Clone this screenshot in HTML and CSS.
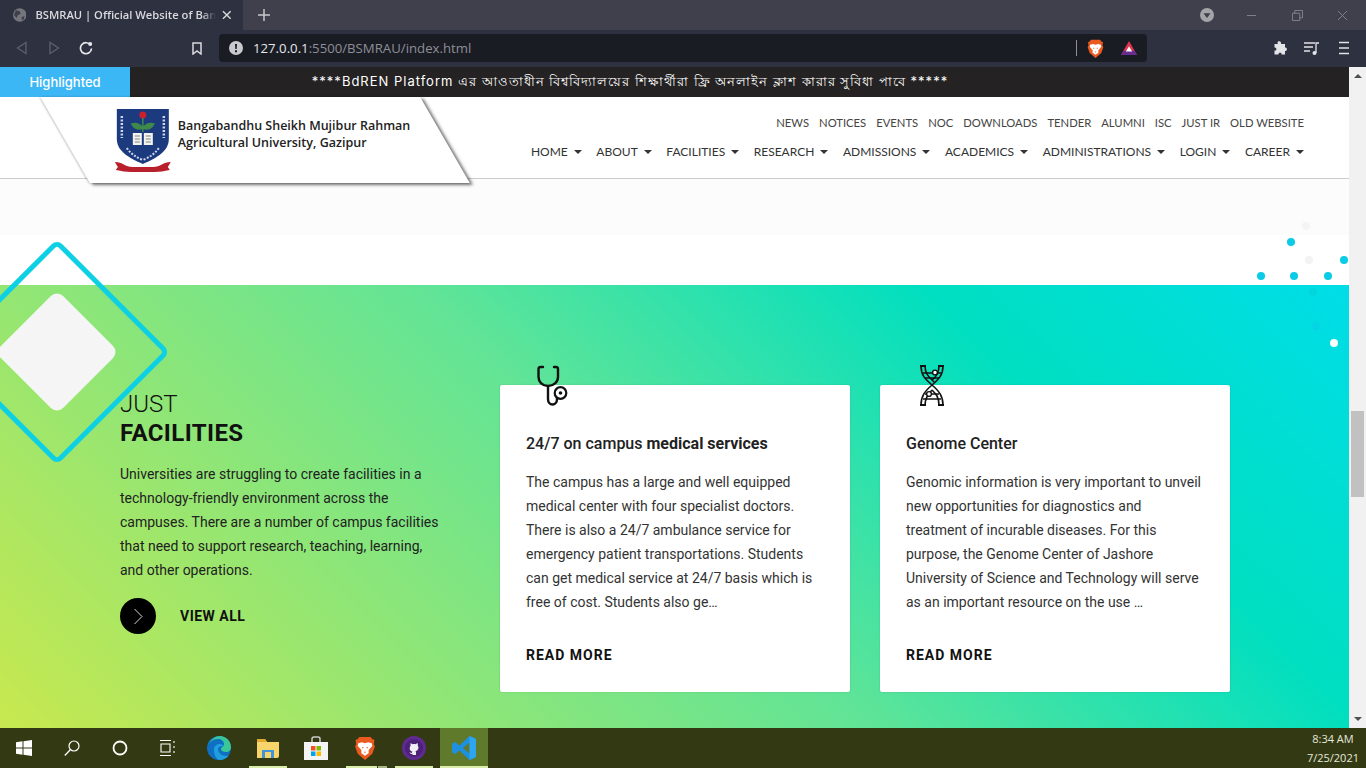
FILE: index.html
```html
<!DOCTYPE html>
<html lang="en">
<head>
    <meta charset="UTF-8">
    <title>BSMRAU | Official Website</title>
    <link rel="stylesheet" href="styles.css">
</head>
<body>
    <!-- browser chrome -->
    <div class="tabstrip">
        <div class="tab">
            <svg class="tab-globe" viewBox="0 0 14 14"><circle cx="7" cy="7" r="7" fill="#74757d"/><path d="M3 2l4 1 1 3-3 1-1 3-3-3zM9 9l3-1-1 4-2 0z" fill="#3f404b"/></svg>
            <span class="tab-title">BSMRAU | Official Website of Ban</span>
            <svg class="tab-close" viewBox="0 0 10 10"><path d="M1 1l8 8M9 1l-8 8" stroke="#d8d8dc" stroke-width="1.5"/></svg>
        </div>
        <svg class="tab-new" viewBox="0 0 14 14"><path d="M7 1v12M1 7h12" stroke="#c8c8cc" stroke-width="1.5"/></svg>
        <div class="window-controls">
            <svg class="profile" viewBox="0 0 14 14"><circle cx="7" cy="7" r="7" fill="#a3a3a8"/><path d="M3.5 5.2h7L7 10z" fill="#3d3e48"/></svg>
            <svg class="win-btn" viewBox="0 0 12 12"><path d="M1 6h10" stroke="#85868c"/></svg>
            <svg class="win-btn" viewBox="0 0 12 12"><path d="M.5 3.5h8v8h-8zM3 3.5V.5h8.500v8H8.500" stroke="#85868c" fill="none"/></svg>
            <svg class="win-btn" viewBox="0 0 12 12"><path d="M1 1l10 10M11 1L1 11" stroke="#85868c"/></svg>
        </div>
    </div>
    <div class="toolbar">
        <svg class="nav-arrow" viewBox="0 0 12 14"><path d="M10 1.500v11L1.500 7z" fill="none" stroke="#5d606c" stroke-width="1.300"/></svg>
        <svg class="nav-arrow" viewBox="0 0 12 14"><path d="M2 1.500v11L10.500 7z" fill="none" stroke="#5d606c" stroke-width="1.300"/></svg>
        <svg class="reload" viewBox="0 0 14 14"><path d="M11.600 4.200A5.500 5.500 0 1 0 12.500 7.500" fill="none" stroke="#e4e5e8" stroke-width="1.700"/><circle cx="11.200" cy="3" r="2" fill="#e4e5e8"/></svg>
        <svg class="bookmark" viewBox="0 0 10 13"><path d="M1 1h8v11L5 9l-4 3z" fill="none" stroke="#d9dade" stroke-width="1.500"/></svg>
        <div class="address-bar">
            <svg class="site-info" viewBox="0 0 14 14"><circle cx="7" cy="7" r="7" fill="#c9cacd"/><path d="M6 3h2l-.3 5H6.300zM6 9.300h2v2H6z" fill="#1a1c24"/></svg>
            <span class="url"><b>127.0.0.1</b>:5500/BSMRAU/index.html</span>
            <span class="bar-sep"></span>
            <svg class="brave-small" viewBox="0 0 20 23"><path d="M4.500 1h11l1.500 2 2 .5-.5 4.500 1 2-2.500 7L10 23l-7-6-2.500-7 1-2L1 3.500 3 3z" fill="#ea5a1e"/><path d="M3.500 7L7 6l3 1 3-1 3.500 1 .5 2.500-3.500 4v3L10 19l-3.500-2.500v-3L3 9.500z" fill="#fff"/><path d="M7 10.500l2 .5-1.500 1zM13 10.500l-2 .5 1.500 1zM9 15h2l-1 1.500z" fill="#ea5a1e"/></svg>
            <svg class="bat" viewBox="0 0 20 18"><path d="M10 1l9 16H1z" fill="#e0344f"/><path d="M1 17l3-5h12l3 5z" fill="#662d91"/><path d="M10 7l3.500 6h-7z" fill="#fff"/></svg>
        </div>
        <svg class="tool-icon" viewBox="0 0 16 16"><path d="M6 1.500c2-.8 3.500.5 3 2.500h4v3.500c2-.8 3 3.500 0 3.500v3.500H9.500c.8-2.500-3.500-2.500-3 0H2.500v-4c2.500.8 2.500-3.500 0-3V4H6c-.6-1 -.6-2 0-2.500z" fill="#e3e4e7"/></svg>
        <svg class="tool-icon" viewBox="0 0 16 16"><path d="M0 3h11M0 7h9M0 11h6" stroke="#e3e4e7" stroke-width="1.300"/><path d="M12 13V3h3" stroke="#e3e4e7" stroke-width="1.300" fill="none"/><circle cx="10.500" cy="13" r="2" fill="#e3e4e7"/></svg>
        <svg class="tool-icon" viewBox="0 0 16 16"><path d="M3 2.500h10M3 8h10M3 13.500h10" stroke="#e3e4e7" stroke-width="1.600"/></svg>
    </div>

    <div class="viewport">
        <div class="page">
            <div class="ticker">
                <span class="ticker-label">Highlighted</span>
                <span class="ticker-text">****BdREN Platform এর আওতাধীন বিশ্ববিদ্যালয়ের শিক্ষার্থীরা ফ্রি অনলাইন ক্লাশ কারার সুবিধা পাবে *****</span>
            </div>

            <header class="site-header">
                <div class="logo-plate">
                    <div class="logo-inner">
                        <svg class="crest" viewBox="0 0 56 64">
                            <path d="M2 1h52v30c0 12-12 19-26 25C14 50 2 43 2 31z" fill="#1c3a7e"/>
                            <circle cx="28" cy="7" r="3.500" fill="#c8202c"/>
                            <path d="M28 10v14M28 20c-3-4-7-5-11-4 2 4 6 6 11 4zM28 20c3-4 7-5 11-4-2 4-6 6-11 4z" stroke="#3f8a4a" stroke-width="1.500" fill="#3f8a4a"/>
                            <path d="M18 25h9v12h-9zM29 25h9v12h-9z" fill="#f2f2ee"/>
                            <path d="M20 28h5M20 31h5M20 34h5M31 28h5M31 31h5M31 34h5" stroke="#555" stroke-width=".7"/>
                            <path d="M7 8v22M49 8v22" stroke="#cfd6ea" stroke-width="2.500" stroke-dasharray="2 1.500"/>
                            <path d="M12 40c4 6 9 9 16 12 7-3 12-6 16-12" fill="none" stroke="#cfd6ea" stroke-width="2" stroke-dasharray="2 1.500"/>
                            <path d="M0 54c8 0 10 5 18 5h20c8 0 10-5 18-5l-3 5 2 3c-6 1-10 2-15 2H16c-5 0-9-1-15-2l2-3z" fill="#b8202c"/>
                        </svg>
                        <div class="logo-text">Bangabandhu Sheikh Mujibur Rahman<br>Agricultural University, Gazipur</div>
                    </div>
                </div>
                <nav class="nav-wrap">
                    <ul class="nav-top">
                        <li>NEWS</li><li>NOTICES</li><li>EVENTS</li><li>NOC</li><li>DOWNLOADS</li><li>TENDER</li><li>ALUMNI</li><li>ISC</li><li>JUST IR</li><li>OLD WEBSITE</li>
                    </ul>
                    <ul class="nav-main">
                        <li>HOME</li><li>ABOUT</li><li>FACILITIES</li><li>RESEARCH</li><li>ADMISSIONS</li><li>ACADEMICS</li><li>ADMINISTRATIONS</li><li>LOGIN</li><li>CAREER</li>
                    </ul>
                </nav>
            </header>

            <div class="band-grey"></div>
            <div class="band-white"></div>

            <section class="facilities">
                <svg class="diamonds" viewBox="0 0 224 224">
                    <rect x="34.500" y="34.500" width="155" height="155" rx="5" transform="rotate(45 112 112)" fill="none" stroke="#0dd0e4" stroke-width="5"/>
                    <rect x="68" y="68" width="88" height="88" rx="9" transform="rotate(45 112 112)" fill="#f5f5f5"/>
                </svg>
                <svg class="dots" viewBox="0 0 120 130">
                    <circle cx="49" cy="4" r="4" fill="#f4f4f4"/>
                    <circle cx="34" cy="20" r="4" fill="#0ccbe6"/>
                    <circle cx="52" cy="38" r="4" fill="#f3f3f3"/>
                    <circle cx="87" cy="38" r="4" fill="#0ccbe6"/>
                    <circle cx="4" cy="54" r="4" fill="#0ccbe6"/>
                    <circle cx="37" cy="54" r="4" fill="#0ccbe6"/>
                    <circle cx="71" cy="54" r="4" fill="#0ccbe6"/>
                    <circle cx="56" cy="70" r="4" fill="#00d6dc"/>
                    <circle cx="59" cy="104" r="4" fill="#05d4e4"/>
                    <circle cx="77" cy="121" r="4" fill="#fff"/>
                </svg>

                <div class="intro">
                    <h2 class="intro-title"><span>JUST</span><b>FACILITIES</b></h2>
                    <p class="intro-text">Universities are struggling to create facilities in a technology-friendly environment across the campuses. There are a number of campus facilities that need to support research, teaching, learning, and other operations.</p>
                    <div class="view-all">
                        <span class="round-btn"><svg viewBox="0 0 10 17"><path d="M1.500 1L9 8.500 1.500 16" fill="none" stroke="#d8d8d8" stroke-width="1"/></svg></span>
                        <span class="view-all-label">VIEW ALL</span>
                    </div>
                </div>

                <article class="card">
                    <svg class="card-icon" viewBox="0 0 31 41">
                        <path d="M6 2H3.500C2 2 1.500 3 1.500 4v8c0 5 4 9 9.500 9s10-4 10-9V4c0-1-.5-2-2-2H17" fill="none" stroke="#111" stroke-width="2.400" stroke-linecap="round"/>
                        <path d="M11 21v13c0 3.500 2 5.500 4.500 5.500s4.500-2 4.500-5.500v-1" fill="none" stroke="#111" stroke-width="2.400"/>
                        <circle cx="23.500" cy="28" r="5.800" fill="none" stroke="#111" stroke-width="2.200"/>
                        <circle cx="23.500" cy="28" r="1.800" fill="#111"/>
                    </svg>
                    <h3 class="card-title">24/7 on campus <b>medical services</b></h3>
                    <p class="card-text">The campus has a large and well equipped medical center with four specialist doctors. There is also a 24/7 ambulance service for emergency patient transportations. Students can get medical service at 24/7 basis which is free of cost. Students also ge…</p>
                    <a class="read-more">READ MORE</a>
                </article>

                <article class="card">
                    <svg class="card-icon card-icon-dna" viewBox="0 0 28 41">
                        <path d="M2 1h6M20 1h6M2 40h6M20 40h6" stroke="#111" stroke-width="2"/>
                        <path d="M3 1c0 9 4 13 11 19 7 6 11 11 11 20M7 1c0 8 4 11 9 16M25 1c0 9-4 13-11 19C7 26 3 31 3 40M21 1c0 7-3 11-7 14M7 40c0-7 3-11 7-15M21 40c0-8-3-11-7-15" fill="none" stroke="#111" stroke-width="1.600"/>
                        <path d="M5 8h18M7 13h14M7 29h14M5 34h18" stroke="#111" stroke-width="1.500"/>
                        <circle cx="17" cy="7.500" r="2.400" fill="#fff" stroke="#111" stroke-width="1.400"/>
                        <circle cx="11" cy="29" r="2.400" fill="#fff" stroke="#111" stroke-width="1.400"/>
                    </svg>
                    <h3 class="card-title">Genome Center</h3>
                    <p class="card-text">Genomic information is very important to unveil new opportunities for diagnostics and treatment of incurable diseases. For this purpose, the Genome Center of Jashore University of Science and Technology will serve as an important resource on the use …</p>
                    <a class="read-more">READ MORE</a>
                </article>
            </section>
        </div>

        <div class="scrollbar">
            <span class="scroll-up"></span>
            <span class="scroll-thumb"></span>
            <span class="scroll-down"></span>
        </div>
    </div>

    <!-- windows taskbar -->
    <footer class="taskbar">
        <div class="task-slot">
            <svg class="task-icon" viewBox="0 0 16 16"><path d="M0 2.300l6.500-1v6.300H0zM7.500 1.200L16 0v7.600H7.500zM0 8.500h6.500v6.300l-6.500-1zM7.500 8.500H16V16l-8.500-1.200z" fill="#fff"/></svg>
        </div>
        <div class="task-slot">
            <svg class="task-icon" viewBox="0 0 16 16"><circle cx="10" cy="6" r="5" fill="none" stroke="#fff" stroke-width="1.200"/><path d="M6.500 9.500L.8 15.500" stroke="#fff" stroke-width="1.300"/></svg>
        </div>
        <div class="task-slot">
            <svg class="task-icon" viewBox="0 0 16 16"><circle cx="8" cy="8" r="6.500" fill="none" stroke="#fff" stroke-width="1.800"/></svg>
        </div>
        <div class="task-slot">
            <svg class="task-icon" viewBox="0 0 16 16"><path d="M0 .5h11M0 15.500h11M1 4h9v8H1zM14 1v2M14 6v2M14 11v2" fill="none" stroke="#fff" stroke-width="1.100"/></svg>
        </div>
        <div class="task-slot slot-edge">
            <svg class="app-icon" viewBox="0 0 24 24">
                <circle cx="12" cy="12" r="12" fill="#0f6fc2"/>
                <path d="M1 10C3 3 9 0 13 0c6 0 11 5 11 11 0 3-2 5-5 5-3 0-5-1-5-3 0-2 3-2 3-5 0-3-3-5-6-5-5 0-9 3-10 7z" fill="#39c79a"/>
                <path d="M7 13c0-3 3-5 6-5 2 0 3 1 3 2-3 0-5 1-5 3 0 4 4 7 8 7 1 0 2-.2 3-.7-2 3-6 4.700-9 4.700-4 0-6-5-6-11z" fill="#1f9fe0"/>
            </svg>
        </div>
        <div class="task-slot running">
            <svg class="app-icon" viewBox="0 0 24 22">
                <path d="M1 2h8l2 3h12v14a2 2 0 0 1-2 2H1z" fill="#f8d56b"/>
                <path d="M1 2h8l2 3H1z" fill="#e2a92f"/>
                <path d="M6 13h12v8H6z" fill="#3f95d6"/>
                <path d="M9 15h6v6H9z" fill="#f8d56b"/>
            </svg>
        </div>
        <div class="task-slot">
            <svg class="app-icon" viewBox="0 0 24 24">
                <path d="M8 6V3a2 2 0 0 1 2-2h4a2 2 0 0 1 2 2v3" fill="none" stroke="#ccc" stroke-width="1.500"/>
                <path d="M0 6h24v18H0z" fill="#f4f4f4"/>
                <path d="M7 10h4.500v4.500H7z" fill="#f25022"/><path d="M12.500 10H17v4.500h-4.500z" fill="#7fba00"/>
                <path d="M7 15.500h4.500V20H7z" fill="#00a4ef"/><path d="M12.500 15.500H17V20h-4.500z" fill="#ffb900"/>
            </svg>
        </div>
        <div class="task-slot running running-multi">
            <svg class="app-icon" viewBox="0 0 20 23"><path d="M4.500 1h11l1.500 2 2 .5-.5 4.500 1 2-2.500 7L10 23l-7-6-2.500-7 1-2L1 3.500 3 3z" fill="#ea5a1e"/><path d="M3.500 7L7 6l3 1 3-1 3.500 1 .5 2.500-3.500 4v3L10 19l-3.500-2.500v-3L3 9.500z" fill="#fff"/><path d="M7 10.500l2 .5-1.500 1zM13 10.500l-2 .5 1.500 1zM9 15h2l-1 1.500z" fill="#ea5a1e"/></svg>
        </div>
        <div class="task-slot running">
            <svg class="app-icon" viewBox="0 0 24 24"><circle cx="12" cy="12" r="12" fill="#5f2b91"/><circle cx="12" cy="12" r="9" fill="#4d2178"/><path d="M8.500 7l2 1.200c1-.3 2-.3 3 0l2-1.200c.4 1 .4 2 .2 2.600 1.500 2 .8 5-2.200 5.700.4.400.5 1 .5 1.500V19h-3.500v-1.200c-1.500.4-2.700-.2-3-1.500.8.200 1.500.7 2.300.7.100-.6.200-1.100.6-1.500-3-.7-3.300-3.800-1.800-5.800-.2-.6-.2-1.700 0-2.700z" fill="#f2eef6"/></svg>
        </div>
        <div class="task-slot running active">
            <svg class="app-icon app-icon-code" viewBox="0 0 24 24">
                <path d="M17.500 0L24 3v18l-6.500 3-10-9.500L3 18l-3-1.500v-9L3 6l4.500 3.500zM17.500 6.500L11 12l6.500 5.500z" fill="#1f8fe0"/>
                <path d="M17.500 0L24 3v18l-6.500 3z" fill="#2ea6ef"/>
            </svg>
        </div>
        <div class="clock">8:34 AM<br>7/25/2021</div>
    </footer>
</body>
</html>
```

FILE: styles.css
```css
* { box-sizing: border-box; }
html, body { height: 100%; }
body { margin: 0; overflow: hidden; font-family: Roboto, sans-serif; background: #fff; display: flex; flex-direction: column; }
ul { list-style: none; margin: 0; padding: 0; }
svg { display: block; }

/* browser chrome */
.tabstrip { height: 30px; flex: none; display: flex; align-items: center; background: #3f404b; }
.tab { width: 243px; height: 30px; display: flex; align-items: center; padding: 0 11px 0 13px; background: #2e313f; }
.tab-globe { width: 14px; height: 14px; margin-right: 9px; }
.tab-title { flex: 1; white-space: nowrap; font: 600 11.2px/14px "Open Sans", sans-serif; color: #d9dade; -webkit-mask-image: linear-gradient(to left, transparent 0, #000 14px); mask-image: linear-gradient(to left, transparent 0, #000 14px); }
.tab-close { width: 10px; height: 10px; margin-left: 6px; }
.tab-new { width: 14px; height: 14px; margin-left: 14px; }
.window-controls { margin-left: auto; display: flex; align-items: center; }
.profile { width: 14px; height: 14px; margin-right: 32px; }
.win-btn { width: 11px; height: 11px; margin-right: 35px; }
.win-btn:nth-child(3) { margin-right: 34px; }
.win-btn:last-child { margin-right: 18px; }

.toolbar { height: 37px; flex: none; display: flex; align-items: center; padding: 0 0 1px 16px; background: #2e313f; }
.nav-arrow { width: 12px; height: 14px; margin-right: 20px; }
.reload { width: 14px; height: 14px; margin-left: -1px; }
.bookmark { width: 10px; height: 13px; margin-left: 99px; margin-right: 17px; }
.address-bar { width: 928px; height: 28px; flex: none; display: flex; align-items: center; padding: 0 9px 0 10px; background: #1a1c24; border-radius: 4px; }
.site-info { width: 14px; height: 14px; margin-right: 10px; }
.url { flex: 1; font: 13.2px "Open Sans", sans-serif; color: #8d8f97; }
.url b { font-weight: 400; color: #e6e7ea; }
.bar-sep { width: 1px; height: 16px; background: #8d8f97; margin-right: 10px; }
.brave-small { width: 17px; height: 19px; margin-right: 16px; }
.bat { width: 18px; height: 16px; }
.tool-icon { width: 16px; height: 16px; margin-left: 16px; }
.address-bar + .tool-icon { margin-left: 125px; }

/* page */
.viewport { flex: 1; display: flex; min-height: 0; }
.page { flex: 1; min-width: 0; overflow: hidden; display: flex; flex-direction: column; }
.scrollbar { width: 17px; flex: none; display: flex; flex-direction: column; align-items: center; background: #f1f1f1; }
.scroll-up { margin-top: 7px; border: 4px solid transparent; border-top: 0; border-bottom: 4px solid #505050; }
.scroll-thumb { width: 13px; height: 86px; margin-top: 333px; background: #c1c1c1; }
.scroll-down { margin-top: auto; margin-bottom: 7px; border: 4px solid transparent; border-bottom: 0; border-top: 4px solid #505050; }

.ticker { height: 30px; flex: none; display: flex; align-items: center; background: #242222; }
.ticker-label { width: 130px; height: 30px; text-align: center; font: 500 13px/30px Inter, sans-serif; color: #fff; background: #3cb7f6; }
.ticker-text { flex: 1; text-align: center; padding-right: 219px; font: 400 13px Inter, "Noto Sans", sans-serif; letter-spacing: 1px; color: #fff; white-space: nowrap; }

.site-header { height: 82px; flex: none; position: relative; display: flex; justify-content: flex-end; background: #fff; border-bottom: 1px solid #ccc; }
.logo-plate { position: absolute; z-index: 3; left: 65px; top: 0; width: 380px; height: 86px; background: #fff; transform: skewX(30deg); box-shadow: 2px 2px 3px rgba(0, 0, 0, .55), -1px 0 2px rgba(0, 0, 0, .2); }
.logo-inner { transform: skewX(-30deg); display: flex; align-items: flex-start; padding: 11px 0 0 53px; }
.crest { width: 56px; height: 64px; flex: none; }
.logo-text { margin: 9px 0 0 7px; white-space: nowrap; font: 600 12.5px/17px "Open Sans", sans-serif; color: #222; }

.nav-wrap { padding: 19px 45px 0 0; font-family: Lato, sans-serif; }
.nav-top { display: flex; justify-content: flex-end; gap: 10px; font-size: 11.25px; line-height: 14px; color: #444; }
.nav-main { display: flex; justify-content: flex-end; gap: 14.6px; margin-top: 14px; font-size: 12px; line-height: 16px; color: #333; }
.nav-main li { display: flex; align-items: center; }
.nav-main li::after { content: ""; margin-left: 6px; border: 4px solid transparent; border-bottom: 0; border-top: 4px solid #333; }

.band-grey { height: 56px; flex: none; background: #fcfcfc; }
.band-white { height: 50px; flex: none; background: #fff; }

.facilities { flex: 1; position: relative; display: flex; align-items: flex-start; padding: 100px 0 0 120px; background: linear-gradient(45deg, #c8e84e 0%, #62e496 48%, #00dfc0 76%, #00dde8 100%); }
.diamonds { position: absolute; left: -55px; top: -45px; width: 224px; height: 224px; overflow: visible; }
.dots { position: absolute; left: 1257px; top: -63px; width: 120px; height: 130px; }

.intro { position: relative; width: 320px; margin-right: 60px; padding-top: 5px; }
.intro-title { margin: 0; font-size: 24px; line-height: 29px; font-weight: 300; color: #111; }
.intro-title span, .intro-title b { display: block; }
.intro-title b { font-weight: 700; letter-spacing: .4px; }
.intro-text { margin: 14px 0 0; font-size: 14px; line-height: 24px; color: #222; }
.view-all { display: flex; align-items: center; margin-top: 16px; }
.round-btn { width: 36px; height: 36px; border-radius: 50%; display: flex; align-items: center; justify-content: center; background: #000; }
.round-btn svg { width: 10px; height: 17px; }
.view-all-label { margin-left: 24px; font-size: 14px; font-weight: 700; letter-spacing: .5px; color: #111; }

.card { position: relative; width: 350px; height: 307px; margin-right: 30px; padding: 0 26px; background: #fff; border-radius: 2px; box-shadow: 0 0 2px rgba(0, 0, 0, .15); }
.card-icon { width: 31px; height: 41px; margin: -20px 0 0 11px; }
.card-icon-dna { width: 28px; margin-left: 12px; }
.card-title { margin: 28px 0 0; font-size: 16px; line-height: 20px; font-weight: 500; color: #222; }
.card-title b { font-weight: 700; }
.card-text { margin: 16px 0 0; font-size: 14px; line-height: 24px; color: #333; }
.read-more { display: block; margin-top: 33px; font-size: 14px; font-weight: 700; letter-spacing: 1px; color: #111; }

/* taskbar */
.taskbar { height: 40px; flex: none; display: flex; background: #333a13; }
.task-slot { width: 48px; height: 40px; position: relative; display: flex; align-items: center; justify-content: center; }
.slot-edge { margin-left: 3px; }
.task-slot.running { margin: 0 .5px; }
.running::after { content: ""; position: absolute; left: 5px; right: 5px; bottom: 0; height: 2px; background: #d9ecaa; }
.running-multi::after { right: 12px; }
.running-multi::before { content: ""; position: absolute; right: 2px; width: 9px; bottom: 0; height: 2px; background: #a9b788; }
.task-slot.active { margin-left: 1.5px; background: #5f7a2a; }
.active::after { left: 0; right: 0; }
.task-icon { width: 16px; height: 16px; }
.app-icon { width: 24px; height: 24px; }
.clock { margin-left: auto; padding: 1px 7px 0 0; text-align: center; font: 11px/19px "Open Sans", sans-serif; color: #e6e8dc; }
```
